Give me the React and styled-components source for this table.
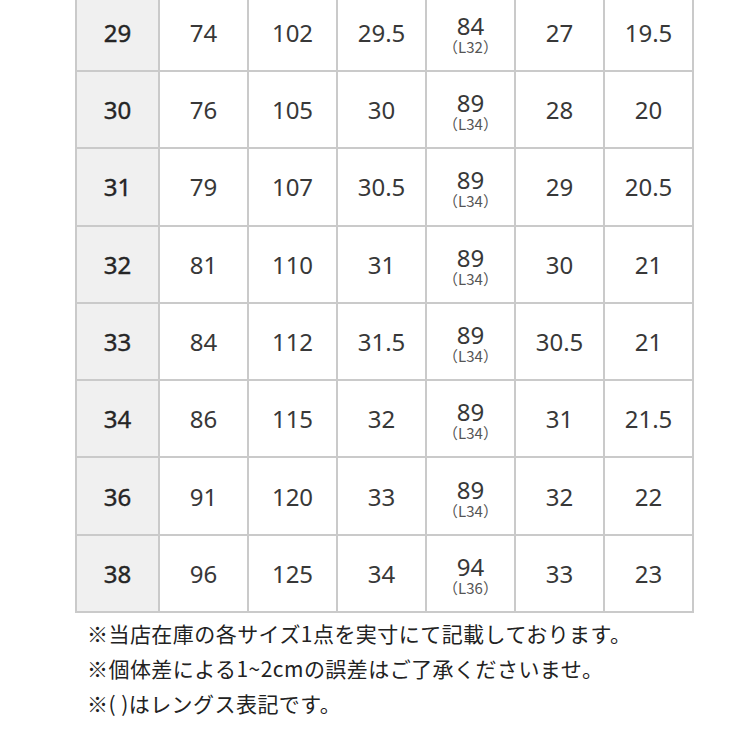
import React from "react";
import styled, { createGlobalStyle } from "styled-components";

const rows = [
  ["29", "74", "102", "29.5", ["84", "L32"], "27", "19.5"],
  ["30", "76", "105", "30", ["89", "L34"], "28", "20"],
  ["31", "79", "107", "30.5", ["89", "L34"], "29", "20.5"],
  ["32", "81", "110", "31", ["89", "L34"], "30", "21"],
  ["33", "84", "112", "31.5", ["89", "L34"], "30.5", "21"],
  ["34", "86", "115", "32", ["89", "L34"], "31", "21.5"],
  ["36", "91", "120", "33", ["89", "L34"], "32", "22"],
  ["38", "96", "125", "34", ["94", "L36"], "33", "23"],
];

const notes = [
  "※当店在庫の各サイズ1点を実寸にて記載しております。",
  "※個体差による1~2cmの誤差はご了承くださいませ。",
  "※( )はレングス表記です。",
];

export default function App() {
  return (
    <>
      <GlobalStyle />
      <Page>
        <Table>
          {rows.map((row) =>
            row.map((value, i) => (
              <Cell key={row[0] + "-" + i} head={i === 0}>
                {Array.isArray(value) ? (
                  <Stack>
                    <Main>{value[0]}</Main>
                    <Sub>（{value[1]}）</Sub>
                  </Stack>
                ) : (
                  value
                )}
              </Cell>
            ))
          )}
        </Table>
        <Notes>
          {notes.map((n) => (
            <p key={n}>{n}</p>
          ))}
        </Notes>
      </Page>
    </>
  );
}

const GlobalStyle = createGlobalStyle`
  html, body {
    margin: 0;
    padding: 0;
    background: #fff;
    overflow: hidden;
  }
  body {
    font-family: "Noto Sans CJK JP", "Noto Sans", sans-serif;
    color: #333;
  }
`;

const Page = styled.div`
  width: 752px;
  height: 752px;
  padding-left: 75px;
  box-sizing: border-box;
`;

const Table = styled.div`
  display: grid;
  grid-template-columns: 81px repeat(6, 87px);
  grid-auto-rows: 75.3px;
  gap: 2px;
  padding: 2px;
  width: max-content;
  margin-top: -7.3px;
  background: #cacaca;
`;

const Cell = styled.div`
  display: flex;
  align-items: center;
  justify-content: center;
  background: ${({ head }) => (head ? "#f0f0f0" : "#fff")};
  font-family: "Noto Sans", "Noto Sans CJK JP", sans-serif;
  font-size: 24px;
  font-weight: 400;
  color: ${({ head }) => (head ? "#252525" : "#383838")};
  -webkit-text-stroke: ${({ head }) => (head ? "0.4px #252525" : "0")};
`;

const Stack = styled.div`
  display: flex;
  flex-direction: column;
  align-items: center;
  margin-top: 2px;
`;

const Main = styled.div`
  line-height: 26px;
  height: 26px;
`;

const Sub = styled.div`
  font-family: "Noto Sans CJK JP", sans-serif;
  font-size: 15px;
  line-height: 15px;
  height: 15px;
  color: #555;
`;

const Notes = styled.div`
  padding: 3px 0 0 12px;
  font-family: "Noto Sans CJK JP", sans-serif;
  font-size: 21px;
  letter-spacing: 0.45px;
  color: #222;

  p {
    margin: 0;
    line-height: 35px;
  }
`;
